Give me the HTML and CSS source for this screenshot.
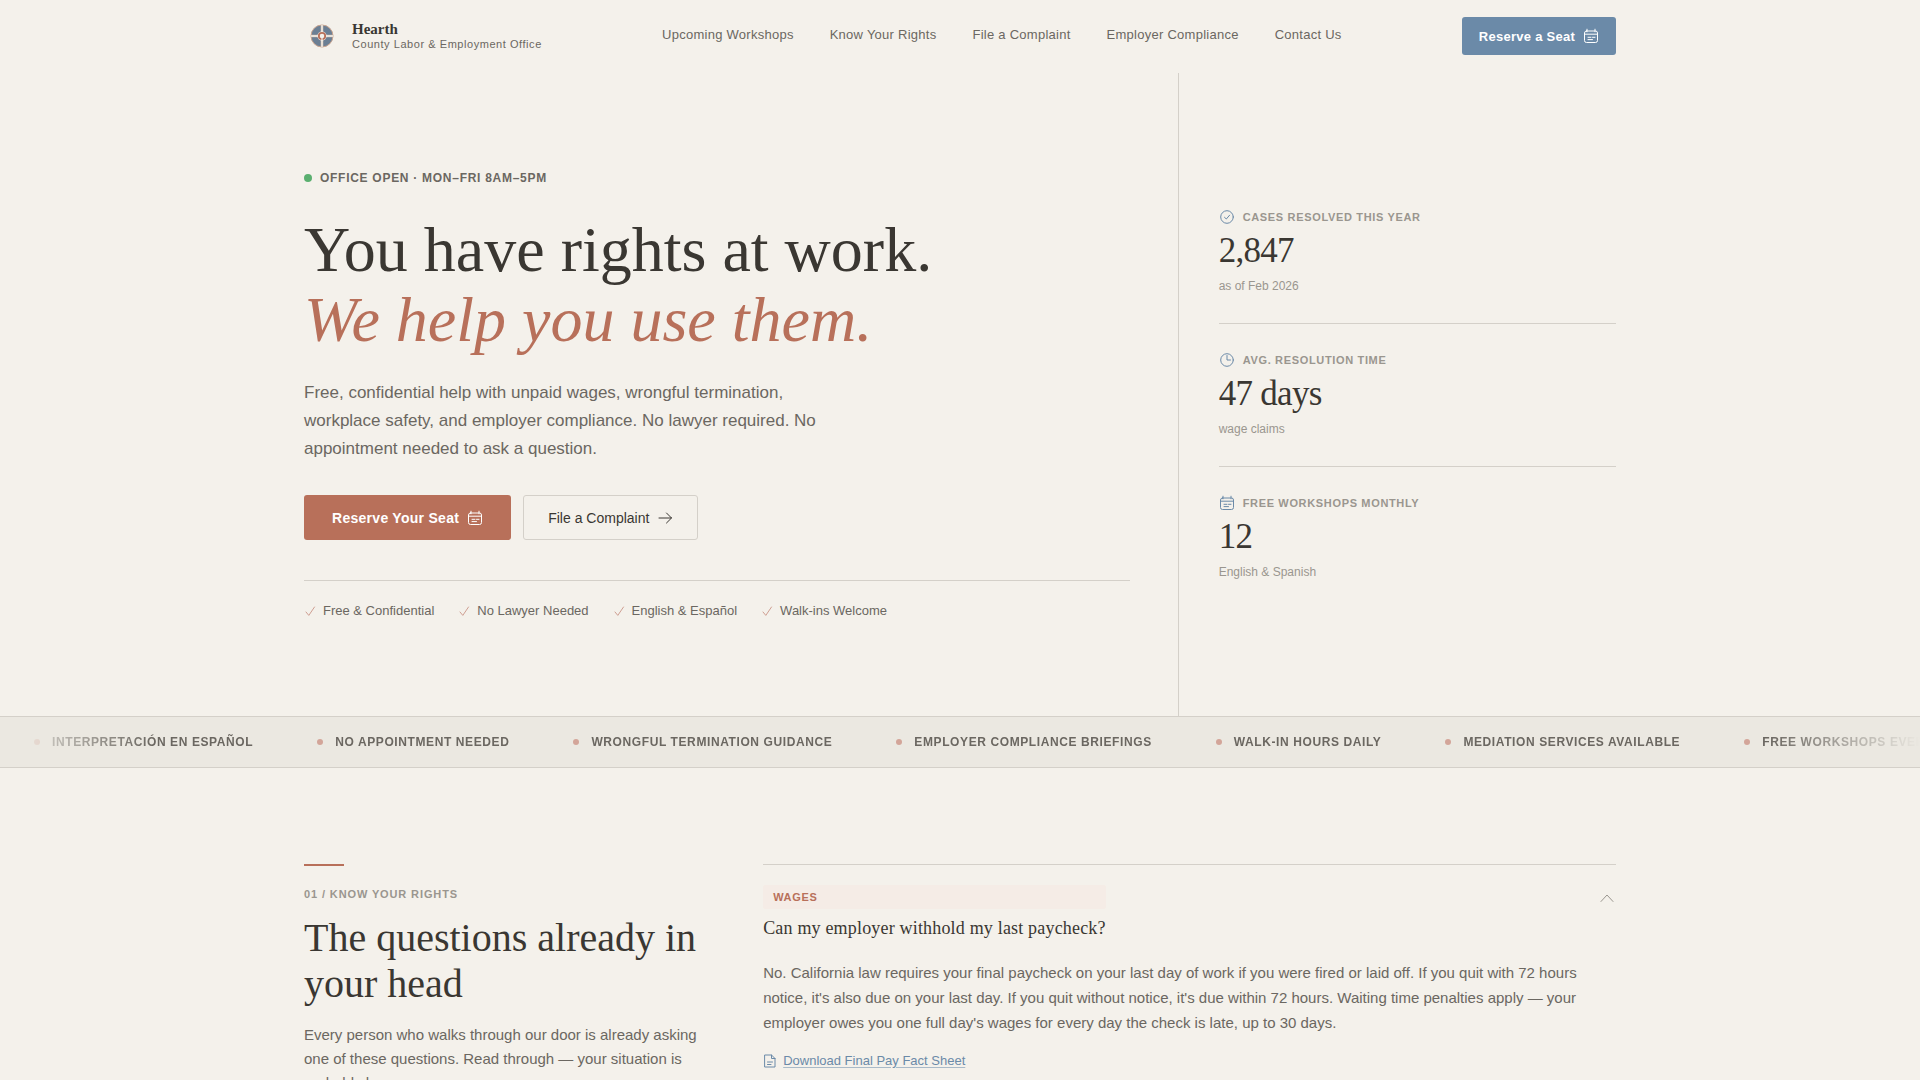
FILE: index.html
```html
<!DOCTYPE html>
<html lang="en">
<head>
  <meta charset="UTF-8">
  <meta name="viewport" content="width=device-width, initial-scale=1.0">
  <title>Hearth | County Labor &amp; Employment Office</title>
  <link rel="stylesheet" href="styles.css">
</head>
<body>

  <!-- Shared icons -->
  <svg class="sprite" aria-hidden="true">
    <symbol id="icon-calendar" viewBox="0 0 16 16">
      <rect x="1.5" y="3" width="13" height="11.5" rx="2"/>
      <path d="M1.5 6.2h13M4 1.2v2.6M12 1.2v2.6M5 9.3h3M9.5 9.3h2.5M5 11.6h4.5"/>
    </symbol>
    <symbol id="icon-check" viewBox="0 0 14 14">
      <path d="M2 8l2.8 3.4L10.5 3"/>
    </symbol>
  </svg>

  <!-- Header Section -->
  <header class="header">
    <div class="container header-row">
      <a class="brand" href="#home">
        <svg class="brand-logo" viewBox="0 0 36 36" aria-hidden="true">
          <circle cx="18" cy="18" r="11" fill="#6b7f94" stroke="#c9a48f"/>
          <path d="M18 7.5v21M7.5 18h21" stroke="#c9b5a5" stroke-width="2.6"/>
          <path d="M18 7v22M7 18h22" stroke="#f4f1eb" stroke-width="1.4"/>
          <circle cx="18" cy="18" r="4.6" fill="#f4f1eb" stroke="none"/>
          <circle cx="18" cy="18" r="3.2" fill="none" stroke="#b8705a" stroke-width="1.8"/>
          <path d="M18 18v4.5" stroke="#f4f1eb" stroke-width="1.2"/>
        </svg>
        <span class="brand-text">
          <span class="brand-name">Hearth</span>
          <span class="brand-sub">County Labor &amp; Employment Office</span>
        </span>
      </a>
      <nav class="nav">
        <a href="#workshops">Upcoming Workshops</a>
        <a href="#rights">Know Your Rights</a>
        <a href="#complaint">File a Complaint</a>
        <a href="#compliance">Employer Compliance</a>
        <a href="#contact">Contact Us</a>
      </nav>
      <button class="btn btn-nav" type="button">Reserve a Seat
        <svg class="icon"><use href="#icon-calendar"/></svg>
      </button>
    </div>
  </header>

  <!-- Hero Section -->
  <section class="container hero" id="home">
    <div class="hero-main">
      <p class="status"><span class="status-dot"></span>Office open · Mon–Fri 8am–5pm</p>
      <h1>You have rights at work.<br><em>We help you use them.</em></h1>
      <p class="lead">Free, confidential help with unpaid wages, wrongful termination, workplace safety, and employer compliance. No lawyer required. No appointment needed to ask a question.</p>
      <div class="actions">
        <button class="btn btn-primary" type="button">Reserve Your Seat
          <svg class="icon"><use href="#icon-calendar"/></svg>
        </button>
        <button class="btn btn-outline" type="button">File a Complaint
          <svg class="icon" viewBox="0 0 16 16"><path d="M2 8h12.5M9.5 3l5 5-5 5"/></svg>
        </button>
      </div>
      <ul class="checks">
        <li><svg class="check"><use href="#icon-check"/></svg>Free &amp; Confidential</li>
        <li><svg class="check"><use href="#icon-check"/></svg>No Lawyer Needed</li>
        <li><svg class="check"><use href="#icon-check"/></svg>English &amp; Español</li>
        <li><svg class="check"><use href="#icon-check"/></svg>Walk-ins Welcome</li>
      </ul>
    </div>

    <aside class="stats">
      <div class="stat">
        <p class="stat-label"><svg class="icon" viewBox="0 0 16 16"><circle cx="8" cy="8" r="6.3"/><path d="M5.5 8.3l1.8 1.7 3.3-3.8"/></svg>Cases resolved this year</p>
        <p class="stat-value">2,847</p>
        <p class="stat-note">as of Feb 2026</p>
      </div>
      <div class="stat">
        <p class="stat-label"><svg class="icon" viewBox="0 0 16 16"><circle cx="8" cy="8" r="6.3"/><path d="M8 3.5V8h3.5"/></svg>Avg. resolution time</p>
        <p class="stat-value">47 days</p>
        <p class="stat-note">wage claims</p>
      </div>
      <div class="stat">
        <p class="stat-label"><svg class="icon"><use href="#icon-calendar"/></svg>Free workshops monthly</p>
        <p class="stat-value">12</p>
        <p class="stat-note">English &amp; Spanish</p>
      </div>
    </aside>
  </section>

  <!-- Ticker -->
  <div class="ticker">
    <ul class="ticker-track">
      <li>Interpretación en Español</li>
      <li>No appointment needed</li>
      <li>Wrongful termination guidance</li>
      <li>Employer compliance briefings</li>
      <li>Walk-in hours daily</li>
      <li>Mediation services available</li>
      <li>Free workshops every month</li>
    </ul>
  </div>

  <!-- Know Your Rights Section -->
  <section class="container rights" id="rights">
    <div class="rights-intro">
      <p class="section-label">01 / Know your rights</p>
      <h2>The questions already in your head</h2>
      <p class="section-text">Every person who walks through our door is already asking one of these questions. Read through — your situation is probably here.</p>
    </div>

    <div class="faq">
      <article class="faq-item">
        <button class="faq-toggle" type="button" aria-expanded="true" aria-controls="answer-1">
          <span class="faq-heading">
            <span class="faq-tag">Wages</span>
            <span class="faq-question">Can my employer withhold my last paycheck?</span>
          </span>
          <svg class="chevron" viewBox="0 0 18 18"><path d="M3 12.5L9 6l6 6.5"/></svg>
        </button>
        <div class="faq-answer" id="answer-1">
          <p>No. California law requires your final paycheck on your last day of work if you were fired or laid off. If you quit with 72 hours notice, it's also due on your last day. If you quit without notice, it's due within 72 hours. Waiting time penalties apply — your employer owes you one full day's wages for every day the check is late, up to 30 days.</p>
          <a class="download" href="#fact-sheet">
            <svg class="file-icon" viewBox="0 0 14 14"><path d="M2 1h6.5L12 4.5V13H2zM8.5 1v3.5H12M4.5 8h5M4.5 10.5h3.5"/></svg>
            <span>Download Final Pay Fact Sheet</span>
          </a>
        </div>
      </article>
    </div>
  </section>

  <script>
    // Open and close the answers
    document.querySelectorAll(".faq-toggle").forEach(function(button) {
      button.addEventListener("click", function() {
        const answer = document.getElementById(button.getAttribute("aria-controls"));
        answer.hidden = !answer.hidden;
        button.setAttribute("aria-expanded", String(!answer.hidden));
      });
    });
  </script>

</body>
</html>
```

FILE: styles.css
```css
:root {
  --bg: #f4f1eb;
  --bg-alt: #ebe8e1;
  --line: #d4d0c9;
  --ink: #3a3732;
  --muted: #6b6761;
  --faint: #9a968f;
  --clay: #b8705a;
  --slate: #6b8aa8;
  --sans: "Liberation Sans", Arial, sans-serif;
  --serif: "Liberation Serif", "Times New Roman", serif;
}

* {
  box-sizing: border-box;
}

body {
  margin: 0;
  background: var(--bg);
  color: var(--ink);
  font-family: var(--sans);
  font-size: 15px;
  line-height: 24px;
}

h1, h2, p, ul {
  margin: 0;
  padding: 0;
}

h1, h2 {
  font-family: var(--serif);
  font-weight: 400;
}

ul {
  list-style: none;
}

a {
  color: inherit;
  text-decoration: none;
}

svg {
  flex-shrink: 0;
  fill: none;
  stroke: currentColor;
  stroke-width: 1;
  stroke-linecap: round;
  stroke-linejoin: round;
}

.sprite {
  display: none;
}

.icon {
  width: 16px;
  height: 16px;
}

.container {
  width: calc(100% - 48px);
  max-width: 1312px;
  margin: 0 auto;
}

/* Header */
.header-row {
  display: flex;
  justify-content: space-between;
  align-items: center;
  padding: 17px 0 18px;
}

.brand {
  display: flex;
  align-items: center;
  gap: 12px;
}

.brand-logo {
  width: 36px;
  height: 36px;
  stroke-linecap: butt;
}

.brand-text {
  display: flex;
  flex-direction: column;
}

.brand-name {
  font-family: var(--serif);
  font-size: 15px;
  font-weight: 700;
  line-height: 16px;
}

.brand-sub {
  color: var(--muted);
  font-size: 11px;
  line-height: 14px;
  letter-spacing: 0.05em;
}

.nav {
  display: flex;
  gap: 36px;
  padding-bottom: 2px;
  color: var(--muted);
  font-size: 13px;
  letter-spacing: 0.02em;
}

.nav a:hover {
  color: var(--ink);
}

/* Buttons */
.btn {
  display: inline-flex;
  align-items: center;
  gap: 8px;
  border: none;
  border-radius: 3px;
  font-family: inherit;
  font-size: 14px;
  cursor: pointer;
}

.btn-nav {
  height: 38px;
  padding: 0 17px;
  background: var(--slate);
  color: #fff;
  font-size: 13px;
  font-weight: 700;
  letter-spacing: 0.02em;
}

.btn-primary {
  height: 45px;
  padding: 0 28px;
  background: var(--clay);
  color: #fff;
  font-weight: 700;
  letter-spacing: 0.02em;
}

.btn-outline {
  height: 45px;
  padding: 0 24px;
  border: 1px solid var(--line);
  background: transparent;
  color: var(--ink);
}

/* Hero */
.hero {
  display: grid;
  grid-template-columns: 2fr 1fr;
}

.hero-main {
  padding: 96px 48px 96px 0;
  border-right: 1px solid var(--line);
}

.status {
  display: flex;
  align-items: center;
  gap: 8px;
  margin-bottom: 28px;
  color: var(--muted);
  font-size: 12px;
  font-weight: 700;
  line-height: 18px;
  letter-spacing: 0.06em;
  text-transform: uppercase;
}

.status-dot {
  width: 8px;
  height: 8px;
  border-radius: 50%;
  background: #5aaf6f;
}

h1 {
  margin-bottom: 24px;
  font-size: 64px;
  line-height: 70px;
}

h1 em {
  color: var(--clay);
}

.lead {
  max-width: 520px;
  margin-bottom: 32px;
  color: var(--muted);
  font-size: 17px;
  line-height: 28px;
}

.actions {
  display: flex;
  gap: 12px;
  margin-bottom: 40px;
}

.checks {
  display: flex;
  flex-wrap: wrap;
  gap: 24px;
  padding-top: 20px;
  border-top: 1px solid var(--line);
  color: var(--muted);
  font-size: 13px;
  line-height: 19px;
}

.checks li {
  display: flex;
  align-items: center;
  gap: 5px;
}

.check {
  width: 14px;
  height: 14px;
  color: #cf9f92;
}

/* Stats */
.stats {
  display: flex;
  flex-direction: column;
  justify-content: center;
  padding-left: 40px;
}

.stat {
  padding: 28px 0;
}

.stat + .stat {
  border-top: 1px solid var(--line);
}

.stat-label {
  display: flex;
  align-items: center;
  gap: 8px;
  margin-bottom: 8px;
  color: var(--faint);
  font-size: 11px;
  font-weight: 700;
  line-height: 16px;
  letter-spacing: 0.06em;
  text-transform: uppercase;
}

.stat-label .icon {
  color: var(--slate);
}

.stat-value {
  margin-bottom: 8px;
  font-family: var(--serif);
  font-size: 35px;
  line-height: 36px;
  letter-spacing: -0.02em;
}

.stat-note {
  color: var(--faint);
  font-size: 12px;
  line-height: 18px;
}

/* Ticker */
.ticker {
  overflow: hidden;
  border-top: 1px solid var(--line);
  border-bottom: 1px solid var(--line);
  background: var(--bg-alt);
}

.ticker-track {
  display: flex;
  gap: 64px;
  overflow: hidden;
  padding: 16px 0 16px 34px;
  color: var(--muted);
  font-size: 12px;
  font-weight: 700;
  line-height: 18px;
  letter-spacing: 0.05em;
  text-transform: uppercase;
  white-space: nowrap;
  -webkit-mask-image: linear-gradient(to right, transparent, #000 8%, #000 92%, transparent);
  mask-image: linear-gradient(to right, transparent, #000 8%, #000 92%, transparent);
}

.ticker-track li {
  display: flex;
  flex-shrink: 0;
  align-items: center;
  gap: 12px;
}

.ticker-track li::before {
  content: "";
  width: 6px;
  height: 6px;
  border-radius: 50%;
  background: #d3a599;
}

/* Know Your Rights */
.rights {
  display: grid;
  grid-template-columns: 35% 65%;
  padding: 96px 0;
}

.rights-intro {
  padding-right: 64px;
}

.rights-intro::before {
  content: "";
  display: block;
  width: 40px;
  height: 2px;
  margin-bottom: 20px;
  background: var(--clay);
}

.section-label {
  margin-bottom: 12px;
  color: var(--faint);
  font-size: 11px;
  font-weight: 700;
  line-height: 17px;
  letter-spacing: 0.08em;
  text-transform: uppercase;
}

h2 {
  margin-bottom: 16px;
  font-size: 40px;
  line-height: 46px;
}

.section-text {
  color: var(--muted);
}

.faq {
  border-top: 1px solid var(--line);
}

.faq-toggle {
  display: flex;
  justify-content: space-between;
  align-items: flex-start;
  width: 100%;
  padding: 20px 0;
  border: none;
  background: none;
  color: var(--ink);
  text-align: left;
  cursor: pointer;
}

.faq-heading {
  display: flex;
  flex-direction: column;
  gap: 8px;
}

.faq-tag {
  padding: 4px 10px;
  border-radius: 2px;
  background: #f5ece6;
  color: var(--clay);
  font-family: var(--sans);
  font-size: 11px;
  font-weight: 700;
  line-height: 16px;
  letter-spacing: 0.06em;
  text-transform: uppercase;
}

.faq-question {
  font-family: var(--serif);
  font-size: 18px;
  line-height: 23px;
  letter-spacing: 0.01em;
}

.chevron {
  width: 18px;
  height: 18px;
  margin-top: 4px;
  color: var(--faint);
}

.faq-toggle[aria-expanded="false"] .chevron {
  transform: rotate(180deg);
}

.faq-answer {
  padding-bottom: 28px;
  color: var(--muted);
}

.faq-answer p {
  margin-bottom: 16px;
  line-height: 25px;
}

.download {
  display: inline-flex;
  align-items: center;
  gap: 6px;
  color: var(--slate);
  font-size: 13px;
  line-height: 16px;
}

.download span {
  text-decoration: underline;
  text-decoration-color: #a9bac8;
  text-underline-offset: 2px;
}

.file-icon {
  width: 14px;
  height: 14px;
}

/* Smaller screens */
@media (max-width: 1000px) {
  .nav {
    display: none;
  }

  .hero, .rights {
    grid-template-columns: 1fr;
  }

  .hero-main, .rights-intro {
    padding-right: 0;
    border-right: none;
  }

  .stats {
    padding-left: 0;
  }

  h1 {
    font-size: 44px;
    line-height: 50px;
  }
}
```
